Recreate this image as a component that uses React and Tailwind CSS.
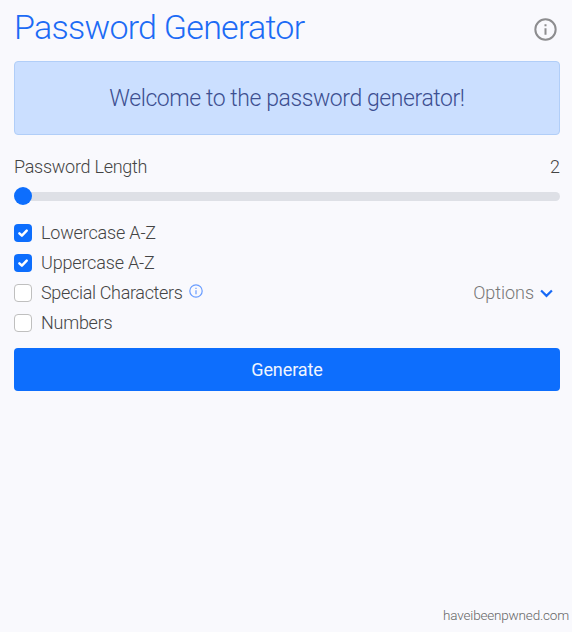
function InfoIcon({ className, stroke }) {
  return (
    <svg viewBox="0 0 24 24" className={className} fill="none" stroke="currentColor" strokeWidth={stroke}>
      <circle cx="12" cy="12" r="10.6" />
      <path d="M12 10.7v6.8M12 6.4v2.2" />
    </svg>
  );
}

function Option({ label, checked, tracking, children }) {
  return (
    <div className="flex h-[30px] items-center">
      <span
        className={
          checked
            ? 'flex size-[18px] items-center justify-center rounded bg-[#0d6efd]'
            : 'size-[18px] rounded border border-[#bfbfbf] bg-white'
        }
      >
        {checked && (
          <svg viewBox="0 0 18 18" className="size-[18px]" fill="none" stroke="white" strokeWidth="2.5" strokeLinecap="round" strokeLinejoin="round">
            <path d="M5.4 9.3l2.5 2.4 4.8-5" />
          </svg>
        )}
      </span>
      <span className={`ml-[9px] whitespace-nowrap ${tracking}`}>{label}</span>
      {children}
    </div>
  );
}

export default function App() {
  return (
    <main className="flex h-[632px] w-[572px] flex-col overflow-hidden bg-[#f9f9fd] pr-3 pl-3.5 font-['Roboto','Open_Sans',sans-serif] text-[18px] leading-6 font-light text-[#444]">
      <header className="flex h-[61px] items-start justify-between">
        <h1 className="mt-1.5 text-[34px] leading-[42px] font-light tracking-[-0.74px] whitespace-nowrap text-[#1c6bf5]">Password Generator</h1>
        <InfoIcon className="mt-[18px] mr-[3px] size-[23px] text-[#8d8d8f]" stroke={2.1} />
      </header>
      <section className="flex h-[74px] shrink-0 items-center justify-center rounded border border-[#b1cef8] bg-[#cbdfff] pt-0.5 text-[23px] tracking-[-0.42px] text-[#3d4f91]">
        <span className="whitespace-nowrap">Welcome to the password generator!</span>
      </section>
      <div className="mt-5 flex h-6 justify-between">
        <span className="tracking-[-0.27px] whitespace-nowrap">Password Length</span>
        <span>2</span>
      </div>
      <div className="mt-2 flex h-[18px] items-center">
        <span className="z-10 size-[18px] shrink-0 rounded-full bg-[#0d6efd]" />
        <span className="-ml-1 h-[9px] flex-1 rounded-r-full bg-[#dee0e6]" />
      </div>
      <div className="mt-[13px]">
        <Option label="Lowercase A-Z" checked tracking="tracking-[-0.18px]" />
        <Option label="Uppercase A-Z" checked tracking="tracking-[-0.18px]" />
        <Option label="Special Characters" tracking="tracking-[-0.33px]">
          <InfoIcon className="mb-1 ml-1.5 size-[14px] shrink-0 text-[#6a9dff]" stroke={2.1} />
          <span className="ml-auto tracking-[-0.05px] text-[#777]">Options</span>
          <svg viewBox="0 0 12 8" className="mr-[7px] ml-1.5 h-[9px] w-[13px]" fill="none" stroke="#1769f5" strokeWidth="2">
            <path d="M1 1.2l5 5 5-5" />
          </svg>
        </Option>
        <Option label="Numbers" tracking="tracking-[-0.25px]" />
      </div>
      <button className="mt-[10px] flex h-[43px] shrink-0 items-center justify-center rounded bg-[#0d6efd] text-[18px] font-normal tracking-[-0.1px] text-[#f0f5ff]">
        Generate
      </button>
      <footer className="mt-auto -mr-[9px] mb-1.5 self-end text-[13.5px] leading-[22px] tracking-[-0.18px] text-[#666]">haveibeenpwned.com</footer>
    </main>
  );
}
